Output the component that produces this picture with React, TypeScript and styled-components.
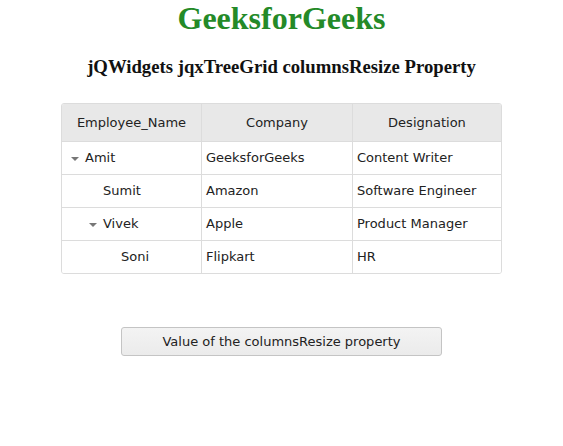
import styled, { createGlobalStyle } from "styled-components";

const GlobalStyle = createGlobalStyle`
  body {
    margin: 0;
    background: #fff;
    font-family: "Liberation Serif", "Times New Roman", serif;
  }
`;

const Page = styled.div`
  display: flex;
  flex-direction: column;
  align-items: center;
`;

const Title = styled.h1`
  margin: 0;
  font-size: 32px;
  line-height: 36px;
  color: #248a28;
  font-weight: bold;
`;

const Subtitle = styled.h3`
  margin: 20px 0 0;
  font-size: 18.72px;
  line-height: 22px;
  color: #111;
  font-weight: bold;
`;

const Grid = styled.div`
  box-sizing: border-box;
  margin-top: 25px;
  width: 441px;
  border: 1px solid #dcdcdc;
  border-radius: 3px;
  overflow: hidden;
  font-family: "DejaVu Sans", Verdana, sans-serif;
  font-size: 13px;
  color: #222;
`;

const Row = styled.div<{ header?: boolean }>`
  display: grid;
  grid-template-columns: 139px 151px 1fr;
  height: ${(p) => (p.header ? "37px" : "32px")};
  background: ${(p) => (p.header ? "#e8e8e8" : "#fff")};
  border-bottom: 1px solid #dcdcdc;

  &:last-child {
    border-bottom: none;
  }
`;

const Cell = styled.div<{ header?: boolean; level?: number }>`
  display: flex;
  align-items: center;
  justify-content: ${(p) => (p.header ? "center" : "flex-start")};
  padding-left: ${(p) => (p.header ? 0 : 4 + (p.level ?? 0) * 18)}px;
  padding-bottom: ${(p) => (p.header ? 0 : 1)}px;
  border-left: 1px solid #dcdcdc;
  white-space: nowrap;
  overflow: hidden;

  &:first-child {
    border-left: none;
    padding-left: ${(p) => (p.header ? 0 : 5 + (p.level ?? 0) * 18)}px;
  }
`;

const Toggle = styled.span<{ open: boolean }>`
  display: inline-block;
  width: 18px;
  flex: none;
  text-align: left;
  padding-left: 4px;
  box-sizing: border-box;

  &::before {
    content: "";
    display: ${(p) => (p.open ? "inline-block" : "none")};
    border-left: 4px solid transparent;
    border-right: 4px solid transparent;
    border-top: 4px solid #777;
    vertical-align: middle;
  }
`;

const Button = styled.button`
  margin-top: 53px;
  width: 321px;
  height: 29px;
  border: 1px solid #c4c4c4;
  border-radius: 3px;
  background: linear-gradient(#f3f3f3, #ebebeb);
  font-family: "DejaVu Sans", Verdana, sans-serif;
  font-size: 13px;
  color: #222;
  padding: 0;
`;

interface Employee {
  name: string;
  company: string;
  designation: string;
  level: number;
  parent: boolean;
}

const employees: Employee[] = [
  { name: "Amit", company: "GeeksforGeeks", designation: "Content Writer", level: 0, parent: true },
  { name: "Sumit", company: "Amazon", designation: "Software Engineer", level: 1, parent: false },
  { name: "Vivek", company: "Apple", designation: "Product Manager", level: 1, parent: true },
  { name: "Soni", company: "Flipkart", designation: "HR", level: 2, parent: false },
];

export default function App() {
  return (
    <Page>
      <GlobalStyle />
      <Title>GeeksforGeeks</Title>
      <Subtitle>jQWidgets jqxTreeGrid columnsResize Property</Subtitle>
      <Grid>
        <Row header>
          <Cell header>Employee_Name</Cell>
          <Cell header>Company</Cell>
          <Cell header>Designation</Cell>
        </Row>
        {employees.map((e) => (
          <Row key={e.name}>
            <Cell level={e.level}>
              <Toggle open={e.parent} />
              {e.name}
            </Cell>
            <Cell>{e.company}</Cell>
            <Cell>{e.designation}</Cell>
          </Row>
        ))}
      </Grid>
      <Button>Value of the columnsResize property</Button>
    </Page>
  );
}
